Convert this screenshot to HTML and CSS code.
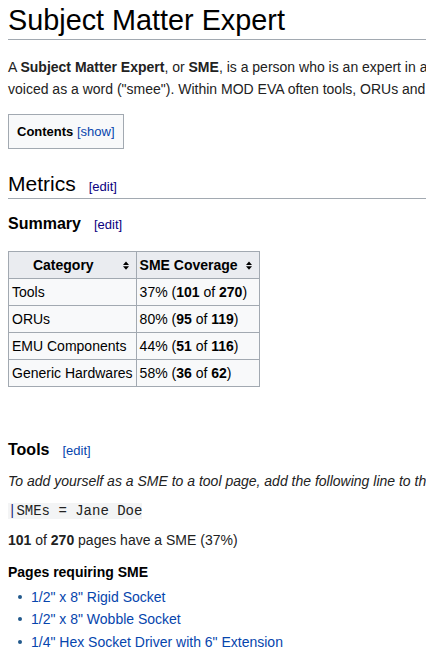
FILE: index.html
```html
<!DOCTYPE html>
<html>
<head>
<meta charset="utf-8">
<title>Subject Matter Expert</title>
<link rel="stylesheet" href="styles.css">
</head>
<body>
<div class="page">
  <h1 class="title">Subject Matter Expert</h1>
  <p class="intro">A <b>Subject Matter Expert</b>, or <b>SME</b>, is a person who is an expert in a particular area or topic. SME is sometimes spelled out or<br>voiced as a word ("smee"). Within MOD EVA often tools, ORUs and EMU components have SMEs assigned to them.</p>
  <div class="toc"><b class="toc-title">Contents</b> <span class="toggle">[<a class="link" href="#">show</a>]</span></div>

  <h2 class="h2">Metrics<span class="editsection visited">[<a href="#">edit</a>]</span></h2>
  <h3 class="h3 summary">Summary<span class="editsection visited">[<a href="#">edit</a>]</span></h3>

  <table class="wikitable">
    <thead>
      <tr>
        <th>Category<svg class="sort" width="6" height="9" viewBox="0 0 6 9"><polygon points="0,4 3,0.5 6,4"/><polygon points="0,5.2 3,8.7 6,5.2"/></svg></th>
        <th>SME Coverage<svg class="sort" width="6" height="9" viewBox="0 0 6 9"><polygon points="0,4 3,0.5 6,4"/><polygon points="0,5.2 3,8.7 6,5.2"/></svg></th>
      </tr>
    </thead>
    <tbody>
      <tr><td>Tools</td><td>37% (<b>101</b> of <b>270</b>)</td></tr>
      <tr><td>ORUs</td><td>80% (<b>95</b> of <b>119</b>)</td></tr>
      <tr><td>EMU Components</td><td>44% (<b>51</b> of <b>116</b>)</td></tr>
      <tr><td>Generic Hardwares</td><td>58% (<b>36</b> of <b>62</b>)</td></tr>
    </tbody>
  </table>

  <h3 class="h3 tools">Tools<span class="editsection">[<a href="#">edit</a>]</span></h3>
  <p class="note"><i>To add yourself as a SME to a tool page, add the following line to the tool's infobox template:</i></p>
  <p class="codeline"><code class="code"><span class="pipe">|</span>SMEs = Jane Doe</code></p>
  <p class="stats"><b>101</b> of <b>270</b> pages have a SME (37%)</p>
  <h4 class="h4">Pages requiring SME</h4>
  <ul class="pages">
    <li><a class="link" href="#">1/2" x 8" Rigid Socket</a></li>
    <li><a class="link" href="#">1/2" x 8" Wobble Socket</a></li>
    <li><a class="link" href="#">1/4" Hex Socket Driver with 6" Extension</a></li>
  </ul>
</div>
</body>
</html>
```

FILE: styles.css
```css
html, body {
  margin: 0;
  padding: 0;
  overflow: hidden;
  background: #ffffff;
}

.page {
  width: 760px;
  padding: 0 0 0 8px;
  font-family: "Liberation Sans", Arial, sans-serif;
  font-size: 14px;
  line-height: 1.6;
  color: #222222;
}

a {
  color: #0645ad;
  text-decoration: none;
}

.title {
  margin: 1px 0 0;
  font-size: 28.8px;
  font-weight: normal;
  line-height: 38px;
  color: #000;
  border-bottom: 1px solid #a2a9b1;
}

.intro {
  margin: 16px 0 0;
  white-space: nowrap;
}

.toc {
  width: fit-content;
  margin-top: 13px;
  padding: 7px 8px;
  border: 1px solid #a2a9b1;
  background: #f8f9fa;
  font-size: 13px;
  line-height: 19px;
  color: #000;
}

.toggle {
  color: #0645ad;
}

.h2 {
  margin: 21px 0 0;
  padding-bottom: 1px;
  font-size: 21px;
  font-weight: normal;
  line-height: 1.3;
  color: #000;
  border-bottom: 1px solid #a2a9b1;
}

.h3 {
  margin: 0;
  font-size: 16px;
  font-weight: bold;
  line-height: 1.6;
  color: #000;
}

.summary {
  margin-top: 12.4px;
}

.tools {
  margin-top: 50.7px;
}

.editsection {
  margin-left: 13px;
  font-size: 13px;
  font-weight: normal;
  color: #0645ad;
}

.editsection.visited,
.editsection.visited a {
  color: #0b0080;
}

.wikitable {
  margin-top: 13.7px;
  border-collapse: collapse;
  border: 1px solid #a2a9b1;
  background: #f8f9fa;
  color: #000;
  font-size: 14px;
  line-height: 20px;
}

.wikitable th,
.wikitable td {
  border: 1px solid #a2a9b1;
  padding: 3px;
  white-space: nowrap;
}

.wikitable th {
  position: relative;
  padding-right: 21px;
  background: #eaecf0;
  text-align: center;
  font-weight: bold;
}

.wikitable td {
  text-align: left;
}

.sort {
  position: absolute;
  right: 7px;
  top: 9px;
  fill: #000;
}

.note {
  margin: 6.7px 0 0;
  white-space: nowrap;
}

.codeline {
  margin: 7px 0 0;
}

.code {
  display: inline-block;
  font-family: "Liberation Mono", "Courier New", monospace;
  font-size: 14px;
  line-height: 16px;
  background: #f3f4f5;
  color: #222;
}

.pipe {
  color: #1b2a7a;
}

.stats {
  margin: 7px 0 0;
}

.h4 {
  margin: 10px 0 0;
  font-size: 14px;
  font-weight: bold;
  line-height: 1.6;
  color: #000;
}

.pages {
  margin: 2.6px 0 0;
  padding: 0 0 0 23px;
  list-style: none;
}

.pages li::before {
  content: "";
  display: inline-block;
  width: 4px;
  height: 4px;
  margin-left: -13px;
  margin-right: 9px;
  border-radius: 50%;
  background: #22598c;
  vertical-align: 3px;
}
```
